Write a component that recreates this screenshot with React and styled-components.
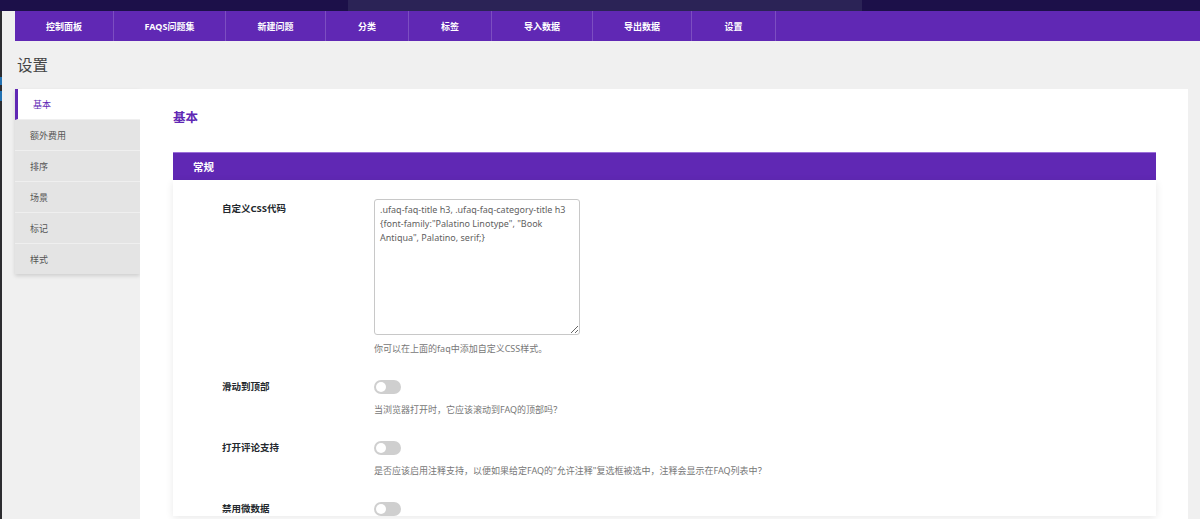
import React from 'react'
import styled, { createGlobalStyle } from 'styled-components'

const purple = '#6028b4'
const cjk = '"Noto Sans", "Noto Sans CJK SC", sans-serif'

const GlobalStyle = createGlobalStyle`
  html, body {
    margin: 0;
    padding: 0;
    background: #f0f0f0;
    font-family: ${ cjk };
    color: #23282d;
    overflow: hidden
  }
`

const TopStrip = styled.div`
  display: flex;
  height: 11px;
  background: #1c1049
`
const GhostModal = styled.div`
  margin-left: 348px;
  width: 514px;
  background: #2b2356
`
const Body = styled.div`
  display: flex;
  min-height: 508px
`
const AdminEdge = styled.div`
  width: 2px;
  background: #2c2c30;
  display: flex;
  flex-direction: column
`
const EdgeMark = styled.span`
  display: block;
  height: ${ p => p.h }px;
  margin-top: ${ p => p.top }px;
  background: #2271b1
`
const Main = styled.div`
  flex: 1;
  padding-left: 13px;
  display: flex;
  flex-direction: column
`
const NavBar = styled.nav`
  display: flex;
  height: 30px;
  background: ${ purple }
`
const NavItem = styled.a`
  display: flex;
  align-items: center;
  justify-content: center;
  width: ${ p => p.w }px;
  border-right: 1px solid rgba(255, 255, 255, 0.18);
  color: #fff;
  font-size: 9px;
  font-weight: 700;
  text-decoration: none;
  box-sizing: border-box
`
const PageTitle = styled.h1`
  margin: 14px 0 0 2px;
  height: 34px;
  font-size: 15.5px;
  line-height: 20px;
  font-weight: 400;
  color: #444
`
const Layout = styled.div`
  display: flex;
  align-items: flex-start;
  padding-right: 12px
`
const Sidebar = styled.ul`
  list-style: none;
  margin: 0;
  padding: 0;
  width: 125px;
  flex-shrink: 0;
  box-shadow: 0 2px 4px rgba(0, 0, 0, 0.14)
`
const Tab = styled.li`
  height: 31px;
  display: flex;
  align-items: center;
  padding-left: 15px;
  box-sizing: border-box;
  font-size: 9px;
  color: ${ p => p.active ? purple : '#555' };
  background: ${ p => p.active ? '#fff' : '#e4e4e4' };
  border-left: ${ p => p.active ? `3px solid ${ purple }` : 'none' };
  border-bottom: 1px solid #efefef;
  &:last-child {
    border-bottom: none;
    height: 30px
  }
`
const Panel = styled.section`
  flex: 1;
  background: #fff;
  min-height: 440px;
  padding: 0 32px 0 33px
`
const PanelTitle = styled.h2`
  margin: 0;
  padding-top: 21px;
  height: 63px;
  box-sizing: border-box;
  font-size: 12.5px;
  line-height: 16px;
  font-weight: 700;
  color: ${ purple }
`
const SectionHeader = styled.div`
  height: 28px;
  display: flex;
  align-items: center;
  padding-left: 20px;
  background: ${ purple };
  border-top: 1px solid #9b6fd8;
  box-sizing: border-box;
  color: #fff;
  font-size: 10.5px;
  font-weight: 700
`
const Card = styled.div`
  padding: 19px 0 0 49px;
  box-shadow: 0 2px 8px rgba(0, 0, 0, 0.09)
`
const Row = styled.div`
  display: grid;
  grid-template-columns: 152px 1fr;
  margin-bottom: 25px
`
const Label = styled.div`
  padding-top: ${ p => p.offset || 0 }px;
  font-size: 9.5px;
  line-height: 14px;
  font-weight: 700;
  color: #23282d
`
const Control = styled.div`
  display: flex;
  flex-direction: column;
  align-items: flex-start
`
const CodeArea = styled.textarea`
  width: 206px;
  height: 136px;
  box-sizing: border-box;
  padding: 3px 5px;
  border: 1px solid #c8c8c8;
  border-radius: 3px;
  font-family: ${ cjk };
  font-size: 9px;
  line-height: 14px;
  color: #5f5f5f;
  resize: both;
  outline: none
`
const Help = styled.p`
  margin: ${ p => p.gap }px 0 0;
  font-size: 9px;
  line-height: 12px;
  color: #777
`
const Toggle = styled.span`
  display: block;
  width: 27px;
  height: 14px;
  border-radius: 7px;
  background: #cfcfcf;
  position: relative;
  &::after {
    content: '';
    position: absolute;
    left: 2px;
    top: 2px;
    width: 10px;
    height: 10px;
    border-radius: 50%;
    background: #fff
  }
`

const navItems = [
  ['控制面板', 99],
  ['FAQS问题集', 112],
  ['新建问题', 100],
  ['分类', 83],
  ['标签', 83],
  ['导入数据', 101],
  ['导出数据', 99],
  ['设置', 84],
]

const tabs = ['基本', '额外费用', '排序', '场景', '标记', '样式']

const toggles = [
  ['滑动到顶部', '当浏览器打开时，它应该滚动到FAQ的顶部吗？'],
  ['打开评论支持', '是否应该启用注释支持，以便如果给定FAQ的"允许注释"复选框被选中，注释会显示在FAQ列表中？'],
  ['禁用微数据', ''],
]

const cssCode = '.ufaq-faq-title h3, .ufaq-faq-category-title h3 {font-family:"Palatino Linotype", "Book Antiqua", Palatino, serif;}'

export default function App() {
  return (
    <>
      <GlobalStyle />
      <TopStrip>
        <GhostModal />
      </TopStrip>
      <Body>
        <AdminEdge>
          <EdgeMark top={ 66 } h={ 8 } />
          <EdgeMark top={ 6 } h={ 10 } />
        </AdminEdge>
        <Main>
          <NavBar>
            { navItems.map(([label, w]) => (
              <NavItem key={ label } w={ w } href='#'>{ label }</NavItem>
            )) }
          </NavBar>
          <PageTitle>设置</PageTitle>
          <Layout>
            <Sidebar>
              { tabs.map((t, i) => (
                <Tab key={ t } active={ i === 0 }>{ t }</Tab>
              )) }
            </Sidebar>
            <Panel>
              <PanelTitle>基本</PanelTitle>
              <SectionHeader>常规</SectionHeader>
              <Card>
                <Row>
                  <Label offset={ 3 }>自定义CSS代码</Label>
                  <Control>
                    <CodeArea readOnly defaultValue={ cssCode } />
                    <Help gap={ 8 }>你可以在上面的faq中添加自定义CSS样式。</Help>
                  </Control>
                </Row>
                { toggles.map(([label, help]) => (
                  <Row key={ label }>
                    <Label>{ label }</Label>
                    <Control>
                      <Toggle />
                      { help && <Help gap={ 10 }>{ help }</Help> }
                    </Control>
                  </Row>
                )) }
              </Card>
            </Panel>
          </Layout>
        </Main>
      </Body>
    </>
  )
}
